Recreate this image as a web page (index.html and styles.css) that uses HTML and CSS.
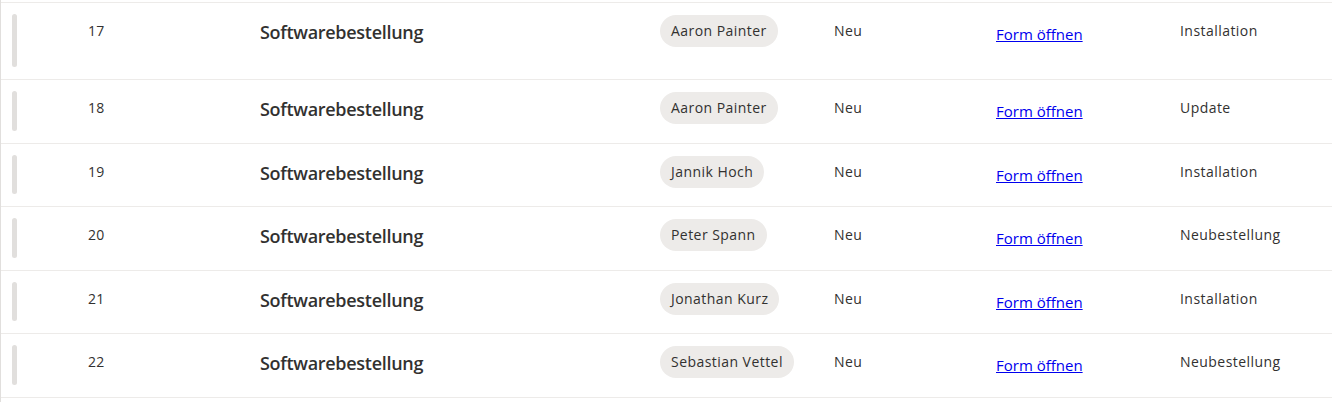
FILE: index.html
```html
<!DOCTYPE html>
<html lang="de">
<head>
<meta charset="utf-8">
<title>Softwarebestellungen</title>
<link rel="stylesheet" href="styles.css">
</head>
<body>
<div class="list">
  <div class="row row--tall">
    <span class="bar"></span>
    <span class="cell num">17</span>
    <span class="cell title">Softwarebestellung</span>
    <span class="cell"><span class="pill">Aaron Painter</span></span>
    <span class="cell">Neu</span>
    <span class="cell linkcell"><a href="#">Form öffnen</a></span>
    <span class="cell">Installation</span>
  </div>
  <div class="row">
    <span class="bar"></span>
    <span class="cell num">18</span>
    <span class="cell title">Softwarebestellung</span>
    <span class="cell"><span class="pill">Aaron Painter</span></span>
    <span class="cell">Neu</span>
    <span class="cell linkcell"><a href="#">Form öffnen</a></span>
    <span class="cell">Update</span>
  </div>
  <div class="row">
    <span class="bar"></span>
    <span class="cell num">19</span>
    <span class="cell title">Softwarebestellung</span>
    <span class="cell"><span class="pill">Jannik Hoch</span></span>
    <span class="cell">Neu</span>
    <span class="cell linkcell"><a href="#">Form öffnen</a></span>
    <span class="cell">Installation</span>
  </div>
  <div class="row">
    <span class="bar"></span>
    <span class="cell num">20</span>
    <span class="cell title">Softwarebestellung</span>
    <span class="cell"><span class="pill">Peter Spann</span></span>
    <span class="cell">Neu</span>
    <span class="cell linkcell"><a href="#">Form öffnen</a></span>
    <span class="cell">Neubestellung</span>
  </div>
  <div class="row">
    <span class="bar"></span>
    <span class="cell num">21</span>
    <span class="cell title">Softwarebestellung</span>
    <span class="cell"><span class="pill">Jonathan Kurz</span></span>
    <span class="cell">Neu</span>
    <span class="cell linkcell"><a href="#">Form öffnen</a></span>
    <span class="cell">Installation</span>
  </div>
  <div class="row">
    <span class="bar"></span>
    <span class="cell num">22</span>
    <span class="cell title">Softwarebestellung</span>
    <span class="cell"><span class="pill">Sebastian Vettel</span></span>
    <span class="cell">Neu</span>
    <span class="cell linkcell"><a href="#">Form öffnen</a></span>
    <span class="cell">Neubestellung</span>
  </div>
</div>
</body>
</html>
```

FILE: styles.css
```css
html, body {
  margin: 0;
  padding: 0;
  background: #ffffff;
}

body {
  font-family: "Open Sans", "Noto Sans", sans-serif;
  font-size: 14px;
  letter-spacing: 0.45px;
  color: #323130;
  height: 402px;
  overflow: hidden;
  border-left: 1px solid #e1dfdd;
  box-sizing: border-box;
  padding-top: 2px;
}

.list {
  border-top: 1px solid #edebe9;
  width: 1331px;
}

.row {
  display: grid;
  grid-template-columns: 76px 172px 400px 174px 162px 184px 1fr;
  align-items: start;
  padding: 11px 0 0 11px;
  height: 63.6px;
  box-sizing: border-box;
  border-bottom: 1px solid #edebe9;
}

.row--tall {
  height: 77px;
}

.bar {
  align-self: stretch;
  width: 5px;
  margin-bottom: 12px;
  border-radius: 3px;
  background: #e1dfdd;
}

.cell {
  line-height: 32px;
  padding-top: 1px;
  white-space: nowrap;
}

.num {
  letter-spacing: 0.2px;
}

.title {
  font-size: 18px;
  font-weight: 600;
  line-height: 34px;
  letter-spacing: -0.3px;
}

.pill {
  display: inline-block;
  height: 32px;
  line-height: 32px;
  margin-top: -1px;
  padding: 0 11px;
  border-radius: 16px;
  background: #edebe9;
}

.linkcell {
  padding-top: 4px;
  font-size: 15px;
  letter-spacing: 0;
}

.linkcell a {
  color: #0000ee;
  text-decoration: underline;
}
```
